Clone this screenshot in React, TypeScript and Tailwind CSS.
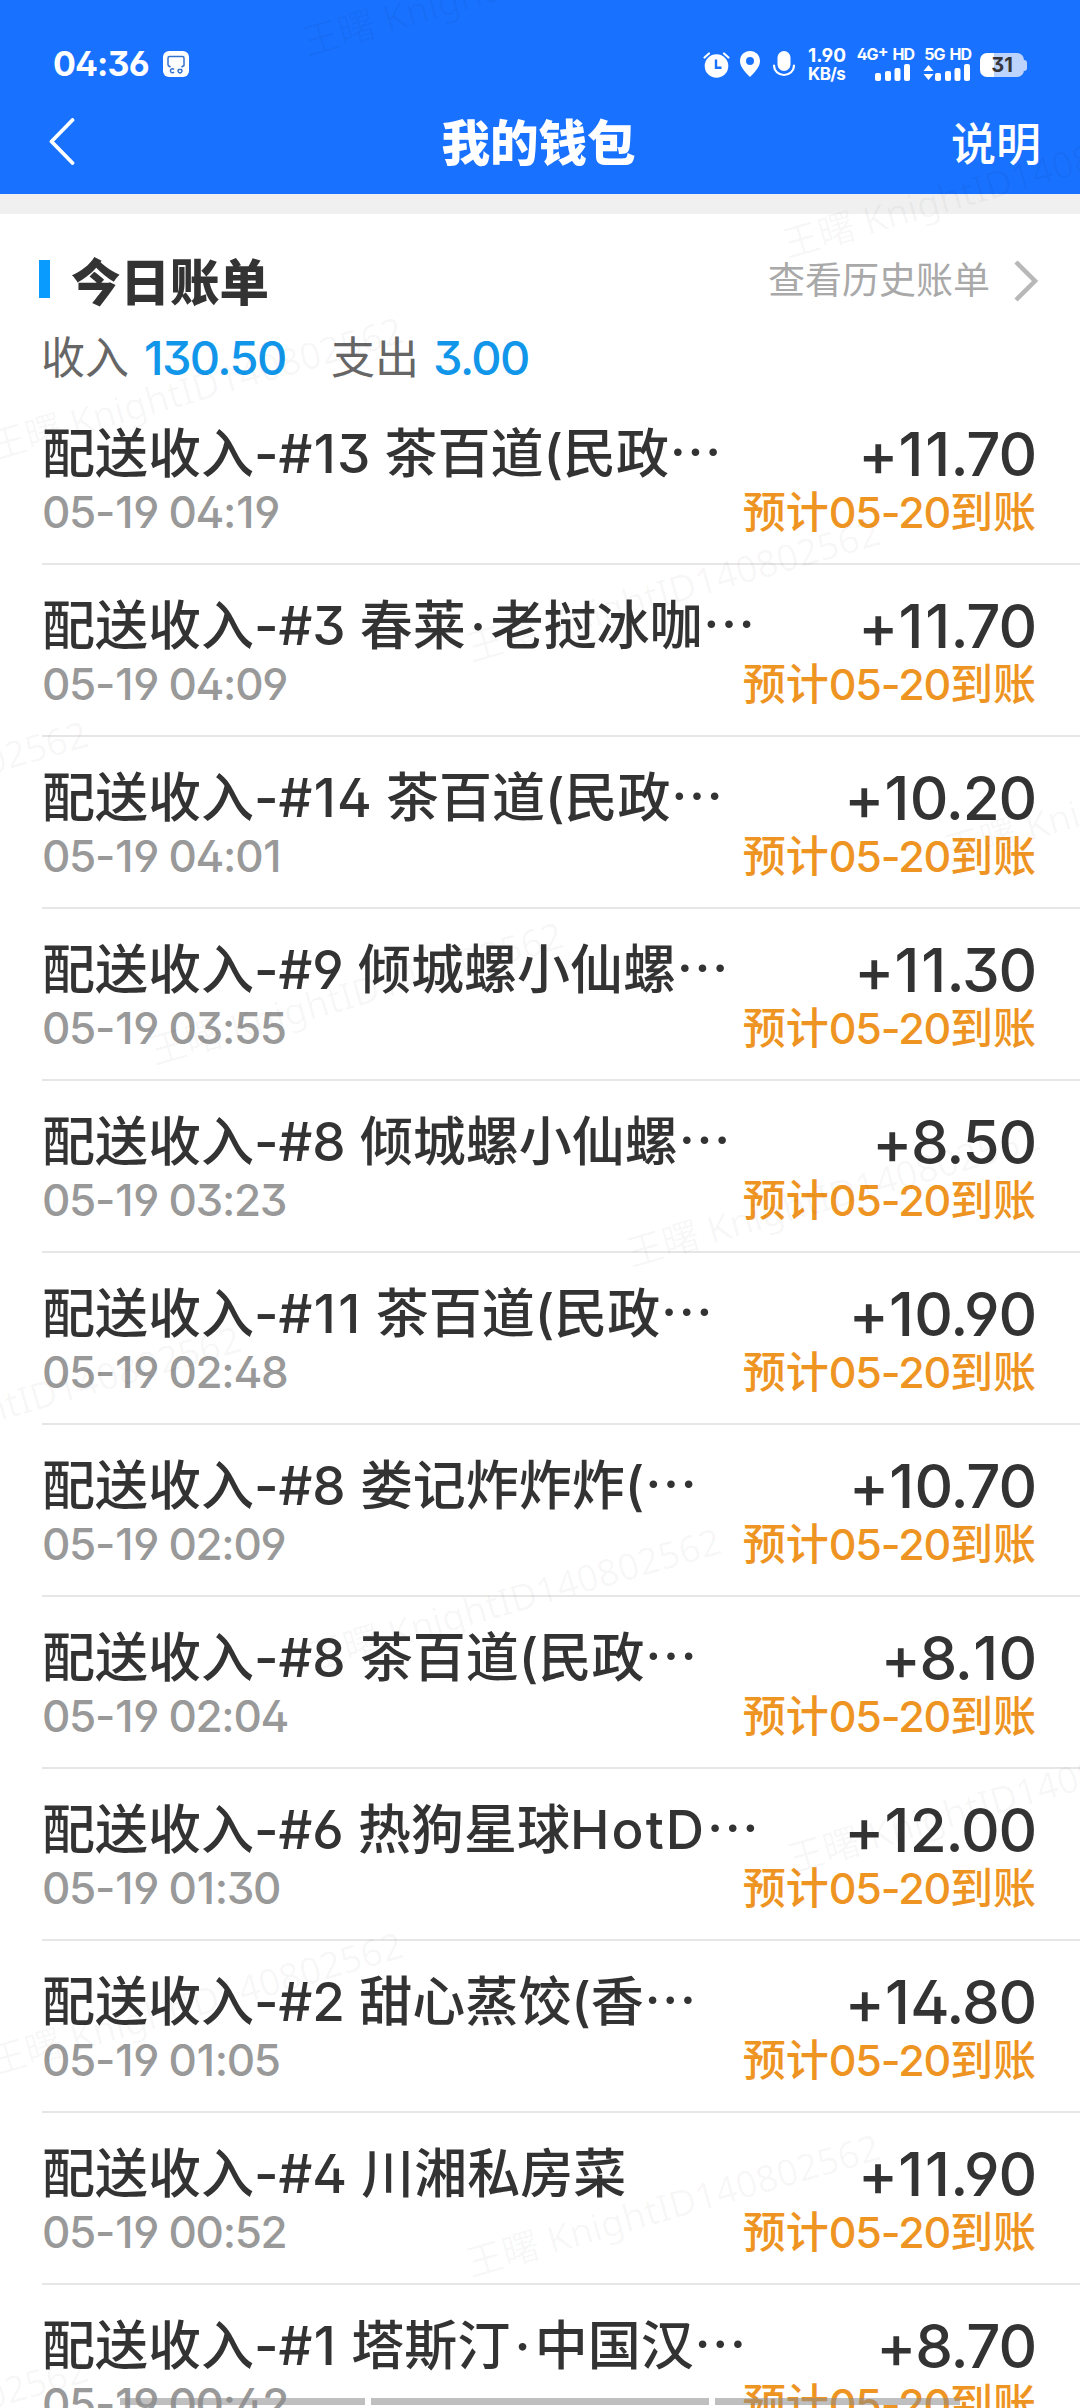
interface Bill {
  order: string
  shop: string
  time: string
  amount: string
}

const bills: Bill[] = [
  { order: '#13', shop: '茶百道(民政…', time: '04:19', amount: '+11.70' },
  { order: '#3', shop: '春莱·老挝冰咖…', time: '04:09', amount: '+11.70' },
  { order: '#14', shop: '茶百道(民政…', time: '04:01', amount: '+10.20' },
  { order: '#9', shop: '倾城螺小仙螺…', time: '03:55', amount: '+11.30' },
  { order: '#8', shop: '倾城螺小仙螺…', time: '03:23', amount: '+8.50' },
  { order: '#11', shop: '茶百道(民政…', time: '02:48', amount: '+10.90' },
  { order: '#8', shop: '娄记炸炸炸(…', time: '02:09', amount: '+10.70' },
  { order: '#8', shop: '茶百道(民政…', time: '02:04', amount: '+8.10' },
  { order: '#6', shop: '热狗星球HotD…', time: '01:30', amount: '+12.00' },
  { order: '#2', shop: '甜心蒸饺(香…', time: '01:05', amount: '+14.80' },
  { order: '#4', shop: '川湘私房菜', time: '00:52', amount: '+11.90' },
  { order: '#1', shop: '塔斯汀·中国汉…', time: '00:42', amount: '+8.70' },
]

// left end of each watermark line
const watermarks = [
  [318, 44],
  [798, 246],
  [5, 448],
  [482, 650],
  [-310, 852],
  [960, 852],
  [165, 1053],
  [642, 1255],
  [-157, 1457],
  [323, 1659],
  [803, 1861],
  [5, 2063],
  [482, 2265],
  [-310, 2487],
]

// Spaces out the glyphs that Inter sets too tight: 1, the middle dot and latin words.
// The ellipsis comes from the CJK font so that it sits at mid height.
function Spaced({ text }: { text: string }) {
  return (
    <>
      {text.split(/(1|·|…|[A-Za-z]+)/).map((part, i) => {
        if (part === '1') return <span key={i} className="px-[0.025em]">1</span>
        if (part === '·') return <span key={i} className="px-[0.08em]">·</span>
        if (part === '…') return <span key={i} className="font-['Noto_Sans_CJK_SC',sans-serif] leading-none">…</span>
        if (/^[A-Za-z]/.test(part)) return <span key={i} className="tracking-[0.04em]">{part}</span>
        return part
      })}
    </>
  )
}

function SignalBars() {
  return (
    <svg width="35" height="17" viewBox="0 0 35 17" fill="white">
      <rect x="0" y="9" width="6" height="8" rx="2" />
      <rect x="10" y="7" width="6" height="10" rx="2" />
      <rect x="19.500" y="4" width="6" height="13" rx="2" />
      <rect x="29" y="0" width="6" height="17" rx="2" />
    </svg>
  )
}

function StatusBar() {
  return (
    <div className="flex h-[96px] items-start pl-[53px] pr-[53px] pt-[46px] font-bold">
      <span className="w-[110px] text-[34px] leading-[35px] tracking-[-0.9px]">04:36</span>
      <svg className="mt-[5px]" width="26" height="26" viewBox="0 0 26 26">
        <rect width="26" height="26" rx="6" fill="white" />
        <path d="M5 14.500V7q0-1.500 1.500-1.500h13Q21 5.500 21 7v7.500l-2.500 1.500M5 14.500 7.500 16" fill="none" stroke="#3573cf" strokeWidth="1.500" />
        <path d="M11 18.500a2 2 0 1 0 0 2.500M15.500 18.500a2 2 0 1 0 3 0z" fill="none" stroke="#3573cf" strokeWidth="1.500" />
      </svg>
      <div className="ml-auto flex items-start">
        <svg className="mt-[6px]" width="27" height="26" viewBox="0 0 27 26">
          <circle cx="13.500" cy="14" r="11.800" fill="white" />
          <path d="M1.500 5.500 6 1.500M25.500 5.500 21 1.500" stroke="white" strokeWidth="2.200" strokeLinecap="round" />
          <path d="M13 7.500v8.300h5.500" fill="none" stroke="#1971ff" strokeWidth="2.400" />
        </svg>
        <svg className="ml-[10px] mt-[5px]" width="20" height="26" viewBox="0 0 20 26">
          <path fillRule="evenodd" d="M10 0C4.300 0 0 4.300 0 10c0 6 5.500 11.500 10 16 4.500-4.500 10-10 10-16C20 4.300 15.700 0 10 0Zm0 6a4 4 0 1 1 0 8 4 4 0 0 1 0-8Z" fill="white" />
        </svg>
        <svg className="ml-[13px] mt-[5px]" width="22" height="26" viewBox="0 0 22 26">
          <rect x="4.500" y="0" width="13" height="20" rx="6.500" fill="white" />
          <path d="M1 14.500c0 5.500 4.500 9.500 10 9.500s10-4 10-9.500" fill="none" stroke="white" strokeWidth="2.200" strokeLinecap="round" />
        </svg>
        <div className="ml-[13px] mt-px w-[49px] text-[19px] leading-[18px]">
          <div>1.90</div>
          <div className="text-[17px] tracking-[-0.6px]">KB/s</div>
        </div>
        <div className="flex w-[58px] flex-col items-end pr-[2px] text-[16px] leading-[16px] tracking-[-1px]">
          <div className="flex gap-[5px] whitespace-nowrap">
            <span>4G<span className="relative -top-[3px]">+</span></span>
            <span className="mr-[-1px]">HD</span>
          </div>
          <div className="mt-[2px] pr-[3px]">
            <SignalBars />
          </div>
        </div>
        <div className="ml-[6px] flex w-[51px] flex-col items-end pr-[2px] text-[16px] leading-[16px] tracking-[-1px]">
          <div className="flex gap-[5px] whitespace-nowrap">
            <span>5G</span>
            <span className="mr-[-1px]">HD</span>
          </div>
          <div className="mt-[2px] flex">
            <svg width="12" height="17" viewBox="0 0 12 17" fill="white">
              <path d="M0.500 7 5.500 1 10.500 7zM0.500 10h10l-5 6z" />
            </svg>
            <SignalBars />
          </div>
        </div>
        <div className="ml-[8px] mt-[7px] flex items-center">
          <div className="flex h-[24px] w-[44px] items-center justify-center rounded-[7px] bg-[linear-gradient(90deg,#fff_32%,#bcd3fb_32%)] text-[20px] text-[#35363c]">
            31
          </div>
          <div className="h-[11px] w-[3px] rounded-r-[3px] bg-[#bcd3fb]" />
        </div>
      </div>
    </div>
  )
}

function NavBar() {
  return (
    <div className="grid h-[98px] grid-cols-[1fr_auto_1fr] items-start pl-[36px] pr-[39px] pt-[22px]">
      <svg className="ml-[13px]" width="27" height="47" viewBox="0 0 27 47" fill="none" stroke="white" strokeWidth="3.800" strokeLinecap="round" strokeLinejoin="round">
        <path d="M23.500 2 2.500 23.500 23.500 45" />
      </svg>
      <h1 className="pt-[2px] text-[48.500px] font-black leading-[48px]">我的钱包</h1>
      <span className="pt-[3px] text-right text-[45px] font-medium leading-[48px]">说明</span>
    </div>
  )
}

function BillRow({ bill }: { bill: Bill }) {
  return (
    <li className="ml-[42px] flex h-[172px] whitespace-nowrap border-b-2 border-[#e6e6e6] pr-[44px] pt-[29px]">
      <div className="w-0 grow">
        <div className="h-[64px] text-[53px] leading-[64px] text-[#333]">
          配送收入-<Spaced text={bill.order} /> <Spaced text={bill.shop} />
        </div>
        <div className="mt-[2px] text-[44px] leading-[48px] tracking-[-1.300px] text-[#999]">
          <Spaced text={`05-19 ${bill.time}`} />
        </div>
      </div>
      <div className="text-right">
        <div className="text-[60px] leading-[64px] tracking-[-1.200px] text-[#333]">
          <Spaced text={bill.amount} />
        </div>
        <div className="mt-[2px] text-[43px] leading-[48px] text-[#ee9422]">
          预计<span className="tracking-[-1.2px]">05-20</span>到账
        </div>
      </div>
    </li>
  )
}

export default function App() {
  return (
    <div lang="zh-CN" className="relative h-[2408px] w-[1080px] overflow-hidden bg-white font-['Inter','Noto_Sans_CJK_SC',sans-serif] [font-feature-settings:'ss01']">
      <header className="h-[194px] bg-[#1971ff] text-white">
        <StatusBar />
        <NavBar />
      </header>
      <div className="h-[20px] bg-[#f0f0f1]" />

      <section className="font-medium">
        <div className="flex h-[104px] items-center pl-[39px] pr-[42px] pt-[30px]">
          <span className="mb-[4px] h-[38px] w-[11px] bg-[#0a9bff]" />
          <h2 className="ml-[21px] mt-[3px] text-[49.500px] font-black leading-[50px] text-[#333]">今日账单</h2>
          <a className="ml-auto text-[37px] font-normal leading-[40px] text-[#a9a9a9]">查看历史账单</a>
          <svg className="ml-[24px]" width="24" height="42" viewBox="0 0 24 42" fill="none" stroke="#b8b8b8" strokeWidth="4.500">
            <path d="M2 2 21 21 2 40" />
          </svg>
        </div>
        <div className="flex h-[75px] items-center pl-[41px] pt-[4px] text-[44px] leading-[50px]">
          <span className="w-[103px] font-normal text-[#666]">收入</span>
          <span className="w-[187px] text-[47px] tracking-[-1.600px] text-[#1296ea]">130.50</span>
          <span className="w-[102px] font-normal text-[#666]">支出</span>
          <span className="text-[47px] tracking-[-1.600px] text-[#1296ea]">3.00</span>
        </div>
        <ul>
          {bills.map((bill) => (
            <BillRow key={bill.time} bill={bill} />
          ))}
        </ul>
      </section>

      {/* system gesture bar */}
      <div className="absolute bottom-[3px] left-[120px] flex gap-[6px]">
        <span className="h-[7px] w-[245px] bg-[#8a8a8a]/55" />
        <span className="h-[7px] w-[338px] bg-[#8a8a8a]/55" />
        <span className="h-[7px] w-[245px] bg-[#8a8a8a]/55" />
      </div>

      <div className="pointer-events-none absolute inset-0 overflow-hidden">
        {watermarks.map(([x, y]) => (
          <span
            key={`${x},${y}`}
            className="absolute origin-left -translate-y-1/2 -rotate-[16deg] whitespace-nowrap font-['Noto_Sans','Noto_Sans_CJK_SC',sans-serif] text-[37px] leading-none text-black/[0.035]"
            style={{ left: x - 15, top: y - 2 }}
          >
            王曙 KnightID140802562
          </span>
        ))}
      </div>
    </div>
  )
}
